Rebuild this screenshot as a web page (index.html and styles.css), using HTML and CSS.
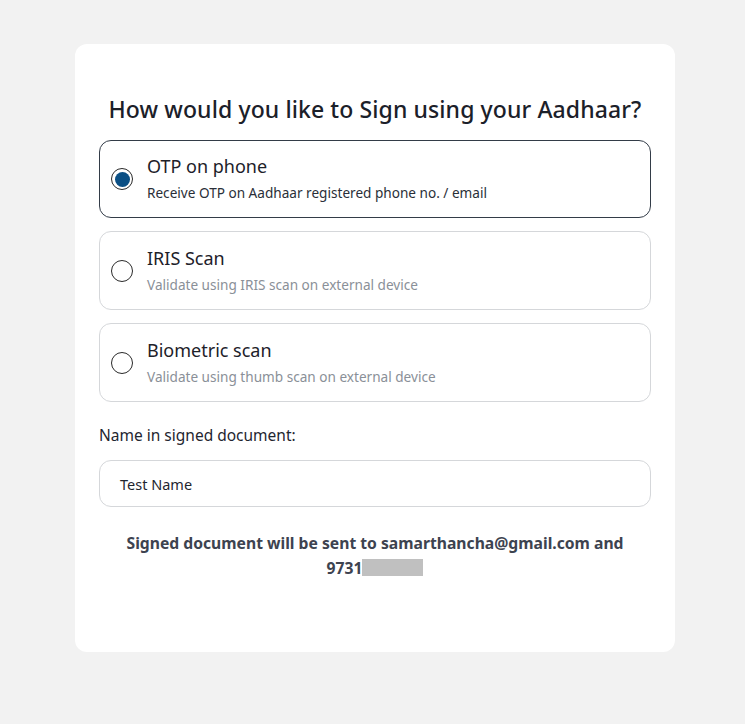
FILE: index.html
```html
<!DOCTYPE html>
<html>
<head>
<meta charset="utf-8">
<link rel="stylesheet" href="styles.css">
</head>
<body>
<div class="page">
  <div class="card">
    <h1 class="title">How would you like to Sign using your Aadhaar?</h1>
    <div class="options">
      <div class="option selected">
        <span class="radio checked"><span class="dot"></span></span>
        <div class="option-text">
          <div class="option-title">OTP on phone</div>
          <div class="option-sub">Receive OTP on Aadhaar registered phone no. / email</div>
        </div>
      </div>
      <div class="option">
        <span class="radio"></span>
        <div class="option-text">
          <div class="option-title">IRIS Scan</div>
          <div class="option-sub muted">Validate using IRIS scan on external device</div>
        </div>
      </div>
      <div class="option">
        <span class="radio"></span>
        <div class="option-text">
          <div class="option-title">Biometric scan</div>
          <div class="option-sub muted">Validate using thumb scan on external device</div>
        </div>
      </div>
    </div>
    <label class="field-label">Name in signed document:</label>
    <div class="input">Test Name</div>
    <p class="note">Signed document will be sent to samarthancha@gmail.com and<br>9731<span class="redact"></span></p>
  </div>
</div>
</body>
</html>
```
FILE: styles.css
```css
html, body {
  margin: 0;
  padding: 0;
  background: #f2f2f2;
}
body {
  font-family: "Noto Sans", "Open Sans", sans-serif;
  color: #1f2630;
}
.page {
  padding: 44px 0 0 75px;
}
.card {
  width: 600px;
  height: 608px;
  box-sizing: border-box;
  background: #ffffff;
  border-radius: 12px;
  padding: 50px 24px 0 24px;
  display: flex;
  flex-direction: column;
}
.title {
  margin: 0;
  font-family: "Noto Sans", sans-serif;
  font-weight: 500;
  font-size: 23px;
  line-height: 30px;
  text-align: center;
  color: #1b2029;
  letter-spacing: 0.1px;
}
.options {
  margin-top: 16px;
  display: flex;
  flex-direction: column;
  gap: 13px;
}
.option {
  height: 79px;
  box-sizing: border-box;
  border: 1px solid #d5d7da;
  border-radius: 12px;
  display: flex;
  align-items: center;
  padding-left: 11px;
  gap: 14px;
}
.option.selected {
  border-color: #333c48;
  height: 78px;
}
.radio {
  width: 22px;
  height: 22px;
  box-sizing: border-box;
  border: 1.5px solid #2a2a2a;
  border-radius: 50%;
  display: flex;
  align-items: center;
  justify-content: center;
  flex: none;
}
.dot {
  width: 15px;
  height: 15px;
  border-radius: 50%;
  background: #0b4f84;
}
.option-text {
  display: flex;
  flex-direction: column;
  gap: 6px;
  margin-top: -2px;
}
.option-title {
  font-size: 18px;
  line-height: 24px;
  color: #1d2129;
}
.option-sub {
  font-size: 13.6px;
  line-height: 18px;
  color: #2a2f38;
}
.option-sub.muted {
  color: #8a9098;
}
.field-label {
  margin-top: 22px;
  font-size: 15.5px;
  line-height: 22px;
  color: #1f2630;
}
.input {
  margin-top: 14px;
  height: 47px;
  box-sizing: border-box;
  border: 1px solid #d5d7da;
  border-radius: 12px;
  padding: 0 20px;
  display: flex;
  align-items: center;
  font-size: 14.5px;
  color: #1f2630;
}
.note {
  margin: 24px 0 0 0;
  text-align: center;
  font-weight: 700;
  font-size: 15.7px;
  line-height: 25px;
  color: #3d4350;
}
.redact {
  display: inline-block;
  width: 61px;
  height: 17px;
  background: #c0c0c0;
  vertical-align: -2px;
}
```
